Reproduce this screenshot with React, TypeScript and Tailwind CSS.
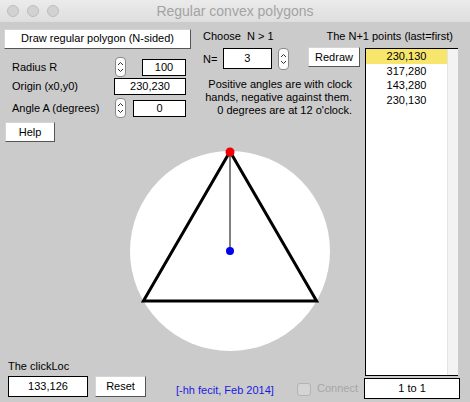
import React from "react";

function Stepper({ h = 20 }: { h?: number }) {
  const mid = h / 2;
  return (
    <svg width={11} height={h} viewBox={`0 0 11 ${h}`} className="shrink-0">
      <rect x={0.5} y={0.5} width={10} height={h - 1} rx={3.5} fill="#fbfbfb" stroke="#8a8a8a" />
      <path d={`M3 ${mid - 2} L5.5 ${mid - 4.5} L8 ${mid - 2}`} fill="none" stroke="#333" strokeWidth={1} />
      <path d={`M3 ${mid + 2} L5.5 ${mid + 4.5} L8 ${mid + 2}`} fill="none" stroke="#333" strokeWidth={1} />
    </svg>
  );
}

const btn =
  "flex items-center justify-center bg-white border-t border-l border-[#d4d4d4] border-r border-b border-r-[#555] border-b-[#555] text-black";
const field = "flex items-center justify-center bg-white border border-black text-black";

export default function App() {
  const points = ["230,130", "317,280", "143,280", "230,130"];
  return (
    <div
      className="w-[470px] h-[402px] overflow-hidden bg-[#cbcbcb] text-[11px] leading-[13px] text-black"
      style={{ fontFamily: '"Liberation Sans", Arial, sans-serif' }}
    >
      {/* title bar */}
      <div className="grid grid-cols-[70px_1fr_70px] items-center h-[22px] bg-gradient-to-b from-[#ebebeb] to-[#dedede]">
        <div className="flex items-center gap-[8px] pl-[7px]">
          <span className="w-[12px] h-[12px] rounded-full bg-[#d2d2d2] border border-[#bdbdbd]" />
          <span className="w-[12px] h-[12px] rounded-full bg-[#d2d2d2] border border-[#bdbdbd]" />
          <span className="w-[12px] h-[12px] rounded-full bg-[#d2d2d2] border border-[#bdbdbd]" />
        </div>
        <div className="text-center text-[14px] leading-[16px] text-[#a3a3a3]">Regular convex polygons</div>
        <div />
      </div>

      <div className="flex h-[380px]">
        {/* main area */}
        <div className="w-[360px] flex flex-col">
          <div className="flex h-[120px]">
            {/* left controls */}
            <div className="w-[195px] pl-[4px] pt-[7px] flex flex-col">
              <div className={`${btn} w-[187px] h-[20px]`}>Draw regular polygon (N-sided)</div>
              <div className="flex items-center h-[21px] mt-[8px]">
                <span className="ml-[8px] w-[103px]">Radius R</span>
                <Stepper h={20} />
                <div className={`${field} ml-[16px] w-[44px] h-[17px]`}>100</div>
              </div>
              <div className="flex items-center h-[17px] mt-[1px]">
                <span className="ml-[8px] w-[102px]">Origin (x0,y0)</span>
                <div className={`${field} w-[72px] h-[17px]`}>230,230</div>
              </div>
              <div className="flex items-center h-[20px] mt-[3px]">
                <span className="ml-[8px] w-[103px]">Angle A (degrees)</span>
                <Stepper h={20} />
                <div className={`${field} ml-[7px] w-[53px] h-[17px]`}>0</div>
              </div>
              <div className={`${btn} ml-[1px] mt-[4px] w-[50px] h-[20px]`}>Help</div>
            </div>
            {/* middle controls */}
            <div className="w-[165px] pl-[8px] pt-[8px] flex flex-col">
              <div className="whitespace-pre">Choose  N &gt; 1</div>
              <div className="flex items-start mt-[4px] h-[23px]">
                <span className="mt-[6px] w-[21px]">N=</span>
                <div className={`${field} mt-[1px] w-[52px] h-[21px]`}>3</div>
                <div className="ml-[6px] mt-[1px]">
                  <Stepper h={22} />
                </div>
                <div className={`${btn} ml-[19px] w-[52px] h-[20px] shrink-0`}>Redraw</div>
              </div>
              <div className="ml-[-10px] mt-[8px] w-[159px] text-right whitespace-nowrap">
                <div>Positive angles are with clock</div>
                <div>hands, negative against them.</div>
                <div>0 degrees are at 12 o'clock.</div>
              </div>
            </div>
          </div>

          {/* canvas */}
          <div className="ml-[130px] mt-[9px] w-[200px] h-[200px]">
            <svg width={200} height={200} viewBox="0 0 200 200" overflow="visible">
              <circle cx={100} cy={100} r={100} fill="#ffffff" />
              <polygon points="100,0.5 13.4,150 186.6,150" fill="none" stroke="#000" strokeWidth={3} />
              <line x1={100} y1={0} x2={100} y2={100} stroke="#000" strokeWidth={1} />
              <circle cx={100} cy={1} r={4.5} fill="#f00000" />
              <circle cx={100} cy={100} r={4} fill="#0000f0" />
            </svg>
          </div>

          {/* bottom */}
          <div className="pl-[8px] mt-[9px]">The clickLoc</div>
          <div className="flex items-start mt-[3px]">
            <div className={`${field} ml-[8px] w-[80px] h-[21px]`}>133,126</div>
            <div className={`${btn} ml-[7px] w-[51px] h-[21px]`}>Reset</div>
            <span className="ml-[30px] mt-[8px] w-[121px] text-[#1a1ae0] whitespace-nowrap">[-hh fecit, Feb 2014]</span>
            <span className="mt-[7px] w-[14px] h-[13px] rounded-[3px] bg-[#d4d4d4] border border-[#b3b3b3]" />
            <span className="ml-[6px] mt-[6px] text-[#a7a7a7]">Connect</span>
          </div>
        </div>

        {/* right column */}
        <div className="w-[110px] flex flex-col pt-[8px]">
          <div className="ml-[-50px] pr-[17px] text-right whitespace-nowrap">The N+1 points (last=first)</div>
          <div className="ml-[5px] mt-[5px] w-[93px] h-[328px] flex border-l border-t border-b border-black">
            <div className="flex-1 bg-white flex flex-col">
              {points.map((p, i) => (
                <div
                  key={i}
                  className={`h-[14.5px] leading-[14.5px] text-center ${i === 0 ? "bg-[#f7e56c]" : ""}`}
                >
                  {p}
                </div>
              ))}
            </div>
            <div className="w-[11px] bg-[#f3f3f3] border-l border-[#e4e4e4]" />
          </div>
          <div className={`${field} ml-[4px] mt-[2px] w-[96px] h-[21px]`}>1 to 1</div>
        </div>
      </div>
    </div>
  );
}
